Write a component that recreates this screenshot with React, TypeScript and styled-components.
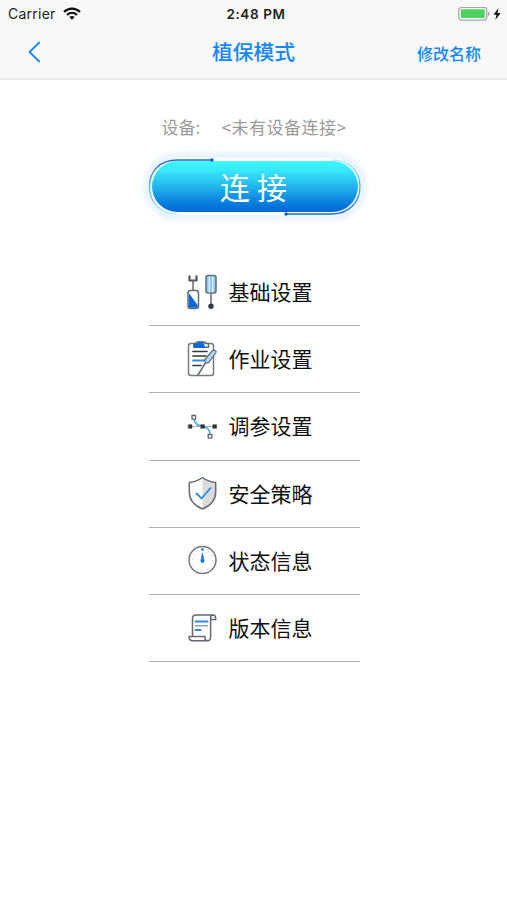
import React from "react";
import styled, { createGlobalStyle } from "styled-components";

const GlobalStyle = createGlobalStyle`
  * { box-sizing: border-box; }
  body {
    margin: 0;
    background: #fff;
    font-family: Inter, "Noto Sans CJK SC", sans-serif;
  }
`;

const Screen = styled.main`
  height: 900px;
  overflow: hidden;
  background: #fff;
  display: flex;
  flex-direction: column;
  align-items: center;
`;

const Header = styled.header`
  width: 100%;
  height: 80px;
  background: #f8f8f8;
  border-bottom: 2px solid #e9e9e9;
`;

const StatusBar = styled.div`
  height: 27px;
  display: grid;
  grid-template-columns: 1fr auto 1fr;
  align-items: center;
  padding: 0 6px 0 8px;
  color: #222;
  font-size: 14px;
  line-height: 20px;
`;

const StatusGroup = styled.div<{ $end?: boolean }>`
  display: flex;
  align-items: center;
  justify-content: ${(p) => (p.$end ? "flex-end" : "flex-start")};
  gap: ${(p) => (p.$end ? "3px" : "7px")};
`;

const Carrier = styled.span`
  letter-spacing: 0.25px;
`;

const Clock = styled.time`
  font-size: 13.5px;
  font-weight: 600;
  letter-spacing: 0.6px;
  margin-left: 3px;
`;

const NavBar = styled.nav`
  height: 51px;
  display: grid;
  grid-template-columns: 1fr auto 1fr;
  align-items: center;
  padding: 0 26px 0 27px;
  color: #1687f8;
`;

const BackButton = styled.button`
  border: 0;
  padding: 0 0 2px;
  background: none;
  display: flex;
  justify-self: start;
`;

const Title = styled.h1`
  margin: 0 1px 0 0;
  padding-top: 1px;
  font-size: 20.8px;
  line-height: 30px;
  font-weight: 500;
`;

const RenameButton = styled.button`
  border: 0;
  padding: 1px 0 0;
  background: none;
  justify-self: end;
  color: inherit;
  font: 500 16px/24px "Noto Sans CJK SC", sans-serif;
`;

const DeviceLine = styled.div`
  margin-top: 35px;
  width: 184px;
  height: 24px;
  display: flex;
  justify-content: space-between;
  white-space: nowrap;
  color: #999;
  font: 400 17px/24px "Noto Sans CJK SC", sans-serif;
`;

const DeviceValue = styled.span`
  letter-spacing: 0.5px;
  margin-right: -1px;
`;

const ConnectButton = styled.button`
  position: relative;
  margin: 22px 0 0 3px;
  width: 206px;
  height: 51px;
  border: 0;
  border-radius: 26px;
  padding: 0 0 0 4px;
  color: #fff;
  background: linear-gradient(#40f8fd 0%, #38e9fa 18%, #1fb0eb 53%, #0879dc 85%, #0068d6 100%);
  box-shadow: 0 0 0 3px #fff, 0 0 5px 7px #e9f3ff, 0 0 5px 10px #f4f9ff;
  font: 400 30px/51px "Noto Sans CJK SC", sans-serif;
  letter-spacing: 7px;
`;

const Outline = styled.svg`
  position: absolute;
  left: -6px;
  top: -5px;
  pointer-events: none;
`;

const Menu = styled.ul`
  list-style: none;
  margin: 47px 0 0 1px;
  padding: 0;
  width: 211px;
`;

const MenuItem = styled.li`
  height: 67.2px;
  display: flex;
  align-items: center;
  gap: 11px;
  padding-left: 35px;
  border-bottom: 1.5px solid #b0b0b0;
  color: #111;
  font-size: 21px;
  line-height: 30px;
`;

const ItemLabel = styled.span`
  padding-top: 2px;
`;

const ItemIcon = styled.svg`
  width: 34px;
  height: 40px;
  margin-top: -1px;
  flex: none;
  fill: none;
  stroke: #666b70;
  stroke-width: 1.5;
  stroke-linecap: round;
  stroke-linejoin: round;
`;

/* Every menu icon is drawn on a 34 x 40 grid. */
const ToolsIcon = () => (
  <ItemIcon viewBox="0 0 34 40">
    <path d="M5.5 3.500v5h7v-5" strokeWidth="2.200" stroke="#555" strokeLinecap="butt" />
    <path d="M9 9v9" />
    <rect x="4" y="18.500" width="10.500" height="18" rx="2.500" fill="#fff" />
    <path d="M4.800 21l8.800 12v2.800H4.800z" fill="#0868d7" stroke="none" />
    <rect x="22" y="3.500" width="10" height="17.500" rx="2" fill="#8dcafa" />
    <path d="M25.300 5v15M28.700 5v15" stroke="#e5f5ff" strokeWidth="1.200" />
    <path d="M27 22v11" />
    <circle cx="27" cy="34.200" r="2.700" fill="#343a46" stroke="none" />
  </ItemIcon>
);

const ClipboardIcon = () => (
  <ItemIcon viewBox="0 0 34 40">
    <rect x="4.500" y="4.500" width="25" height="32" rx="2.500" fill="#fff" stroke="#777b80" />
    <path d="M10 8.200V4.500h3V3h8v1.500h3.500v3.700z" fill="#fff" />
    <path d="M9.500 8.700v-4.200h4V2.700h5.500l2.500 6z" fill="#0868d7" stroke="none" />
    <path d="M9 12.500h14M9 17h13M9 26.500h8" stroke="#34383c" strokeWidth="1.700" />
    <path d="M9 21.500h12" stroke="#2c8bea" strokeWidth="2" />
    <path d="M14 36l8-13" />
    <path d="M21 20.500l7-8.500c2-2 5-.5 3.700 2L25 23.200c-1.600 2-5 0-4-2.700z" fill="#a9d8fb" strokeWidth="1.200" />
  </ItemIcon>
);

const CurveIcon = () => (
  <ItemIcon viewBox="0 0 34 40">
    <path d="M6 20.500h25" strokeWidth="1" stroke="#aaa" />
    <path d="M9.700 12.500c1 5 4 7.500 9 8s7 4 7.300 8" stroke="#4eafee" strokeWidth="1.700" />
    <path d="M4.500 18.700H8v3.600H4.500zM17 18.700h3.500v3.600H17zM29 18.700h3.500v3.600H29z" fill="#303033" stroke="#303033" strokeWidth=".5" />
    <path d="M8 9.500h3.600v3.600H8zM24.200 28.500h3.600v3.600h-3.600z" fill="#fff" stroke="#67636b" strokeWidth="1.300" />
  </ItemIcon>
);

const ShieldIcon = () => (
  <ItemIcon viewBox="0 0 34 40">
    <path d="M18.500 5c4 2.500 8 4 13 4.500v10.200c0 7.300-5 12.300-13 15.800z" fill="#d9dbdd" stroke="none" />
    <path d="M18.500 4.500c4 3 8 4.500 13.200 5v9.500c0 7.500-5 13.500-13.200 17-8.200-3.500-13.200-9.500-13.200-17V9.500c5.200-.5 9.200-2 13.200-5z" />
    <path d="M12 20l5.500 5.500 9.500-11" stroke="#298ae5" strokeWidth="1.800" strokeLinecap="butt" strokeLinejoin="miter" />
  </ItemIcon>
);

const GaugeIcon = () => (
  <ItemIcon viewBox="0 0 34 40">
    <circle cx="18.500" cy="20" r="13.500" stroke="#777" />
    <circle cx="18.500" cy="20" r="10.500" stroke="#aaa" strokeWidth="1.500" strokeDasharray=".5 4.998" strokeLinecap="butt" />
    <path d="M18.500 13.500l1.600 7.500a1.600 1.600 0 0 1-3.200 0z" fill="#0878dd" stroke="#0878dd" strokeWidth=".8" />
    <circle cx="18.500" cy="9.500" r="1.400" fill="#2f8fe6" stroke="none" />
  </ItemIcon>
);

const ScrollIcon = () => (
  <ItemIcon viewBox="0 0 34 40">
    <path d="M8.500 28V10.500C8.500 8 9.500 7 12 7h17c2.200 0 2.800 1.200 2.800 4.500h-5.200V29c0 2.500-1 3.700-3 3.700H8.500c-2.500 0-3.500-1.200-3.500-4.200h16v1.200c0 2 1 3 2.600 3" fill="#fff" />
    <path d="M26.600 11.500V10c0-2 1-3 2.400-3" />
    <path d="M11.500 13.500h12M11.500 22h5" stroke="#2688e3" strokeWidth="1.900" />
    <path d="M11.500 17.700h12" stroke="#91a4b5" strokeWidth="1.400" />
  </ItemIcon>
);

const items = [
  { label: "基础设置", Icon: ToolsIcon },
  { label: "作业设置", Icon: ClipboardIcon },
  { label: "调参设置", Icon: CurveIcon },
  { label: "安全策略", Icon: ShieldIcon },
  { label: "状态信息", Icon: GaugeIcon },
  { label: "版本信息", Icon: ScrollIcon },
];

export default function App() {
  return (
    <Screen>
      <GlobalStyle />
      <Header>
        <StatusBar>
          <StatusGroup>
            <Carrier>Carrier</Carrier>
            <svg width="18" height="14" viewBox="0 0 18 14" fill="none" stroke="#111" strokeWidth="2.300">
              <path d="M1 4.800c4.700-4.300 11.300-4.300 16 0M4 7.900c3-2.700 7-2.700 10 0" />
              <path d="M6.300 10c1.600-1.400 3.800-1.400 5.400 0L9 12.700z" fill="#111" stroke="none" />
            </svg>
          </StatusGroup>
          <Clock>2:48 PM</Clock>
          <StatusGroup $end>
            <svg width="32" height="14" viewBox="0 0 32 14">
              <rect x=".8" y=".3" width="28" height="12.800" rx="3" fill="#fff" stroke="#a5a7a7" strokeWidth="1.300" />
              <rect x="2.800" y="2.300" width="24" height="8.800" rx="1" fill="#4bd55f" />
              <path d="M30 4.400c2 .8 2 3.800 0 4.600z" fill="#a5a7a7" />
            </svg>
            <svg width="8" height="12" viewBox="0 0 8 12" fill="#111">
              <path d="M5.500 0L.5 6.700h3L2.300 12l5.300-7H4.500z" />
            </svg>
          </StatusGroup>
        </StatusBar>
        <NavBar>
          <BackButton aria-label="返回">
            <svg width="14" height="22" viewBox="0 0 14 22" fill="none" stroke="#1687f8" strokeWidth="1.800">
              <path d="M12.700 1L2.500 11l10.200 10" />
            </svg>
          </BackButton>
          <Title>植保模式</Title>
          <RenameButton>修改名称</RenameButton>
        </NavBar>
      </Header>
      <DeviceLine>
        <span>设备:</span>
        <DeviceValue>&lt;未有设备连接&gt;</DeviceValue>
      </DeviceLine>
      <ConnectButton>
        连接
        <Outline width="219" height="62" viewBox="0 0 219 62" fill="none">
          <defs>
            <linearGradient id="leftLine" x1="0" y1="0" x2="0" y2="1">
              <stop offset="0" stopColor="#2467bb" />
              <stop offset=".6" stopColor="#55bef2" />
              <stop offset="1" stopColor="#bdeaff" />
            </linearGradient>
            <linearGradient id="rightLine" x1="0" y1="0" x2="0" y2="1">
              <stop offset="0" stopColor="#bdeaff" />
              <stop offset=".4" stopColor="#4cbaf0" />
              <stop offset="1" stopColor="#1668c8" />
            </linearGradient>
          </defs>
          <path d="M66 4H31C14 4 3.500 15 3.500 30.500S14 58 31 58" stroke="url(#leftLine)" strokeWidth="1.300" />
          <path d="M186 4c17 0 28 11 28 26.500S203 58 186 58h-46" stroke="url(#rightLine)" strokeWidth="1.300" />
          <circle cx="66" cy="4" r="1.700" fill="#155ab4" />
          <circle cx="140" cy="58" r="1.700" fill="#155ab4" />
        </Outline>
      </ConnectButton>
      <Menu>
        {items.map(({ label, Icon }) => (
          <MenuItem key={label}>
            <Icon />
            <ItemLabel>{label}</ItemLabel>
          </MenuItem>
        ))}
      </Menu>
    </Screen>
  );
}
